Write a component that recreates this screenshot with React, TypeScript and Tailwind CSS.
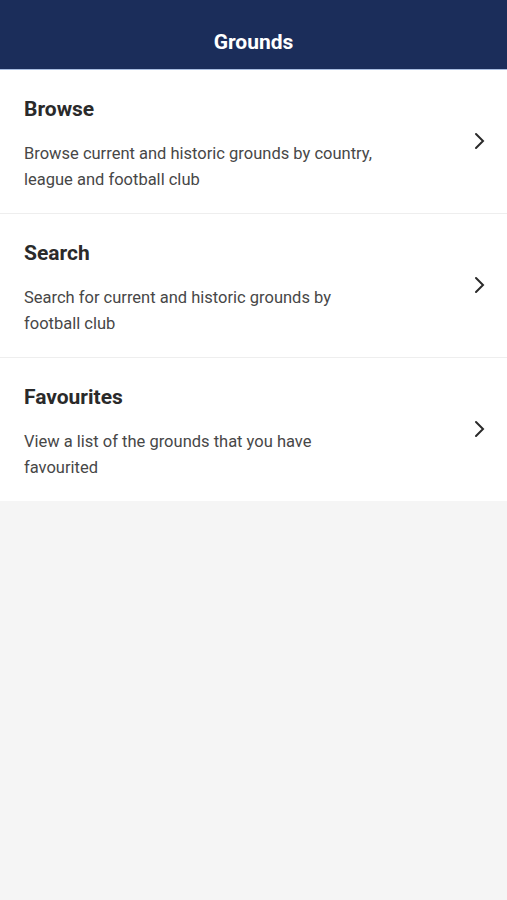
import React from "react";

const items = [
  { title: "Browse", desc: ["Browse current and historic grounds by country,", "league and football club"] },
  { title: "Search", desc: ["Search for current and historic grounds by", "football club"] },
  { title: "Favourites", desc: ["View a list of the grounds that you have", "favourited"] },
];

export default function App() {
  return (
    <div className="min-h-[900px] bg-[#f5f5f5]" style={{ fontFamily: "Roboto, 'Noto Sans', sans-serif" }}>
      <div className="h-[70px] bg-[#1b2d5a] flex items-center justify-center border-b border-[#a9bde0]">
        <span className="text-white text-[21px] font-bold mt-[16px]">Grounds</span>
      </div>
      <div className="bg-white">
        {items.map((it, i) => (
          <div
            key={it.title}
            className={`flex items-center pl-6 pr-5 pt-6 pb-[20px] ${i < 2 ? "border-b border-[#eeeeee]" : ""}`}
          >
            <div className="flex-1">
              <div className="text-[21px] leading-7 font-bold text-[#2a2a2a] mt-[1px]">{it.title}</div>
              <div className="mt-[18px] text-[16.5px] leading-[26px] text-[#474747]">
                {it.desc.map((l) => (
                  <div key={l}>{l}</div>
                ))}
              </div>
            </div>
            <svg width="14" height="20" viewBox="0 0 14 20" className="mt-[-5px]">
              <path d="M3 3 L10 10 L3 17" fill="none" stroke="#2a2a2a" strokeWidth="2" strokeLinecap="round" strokeLinejoin="miter" />
            </svg>
          </div>
        ))}
      </div>
    </div>
  );
}
